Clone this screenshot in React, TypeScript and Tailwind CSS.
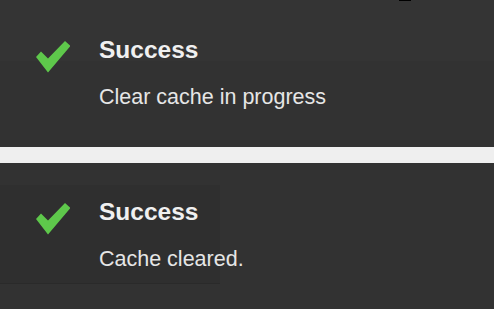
import React from 'react';

interface ToastProps {
  title: string;
  message: string;
  className?: string;
}

const CheckIcon: React.FC = () => (
  <svg width="34" height="32" viewBox="0 0 34 32" className="shrink-0">
    <polygon points="0,16 5,10.5 12,17.5 29,0 34.5,5 12,31.5" fill="#5ec84b" />
  </svg>
);

const Toast: React.FC<ToastProps> = ({ title, message, className = '' }) => (
  <div className={`flex pt-[13px] pb-[12px] ${className}`}>
    <div className="w-[99px] pl-[36px] pt-[5px] shrink-0">
      <CheckIcon />
    </div>
    <div className="flex flex-col">
      <div className="text-[24.5px] leading-[28px] font-bold text-[#f0f0f0]">{title}</div>
      <div className="mt-[21px] text-[21.5px] leading-[24px] text-[#e6e6e6] whitespace-nowrap">{message}</div>
    </div>
  </div>
);

export default function App() {
  return (
    <div className="relative flex flex-col h-[309px] w-full overflow-hidden bg-[#323232] font-['Liberation_Sans',Arial,sans-serif]">
      {/* first notification */}
      <section className="h-[147px] pt-[23px] bg-[linear-gradient(#343434_0_61px,#323232_61px)]">
        <Toast title="Success" message="Clear cache in progress" />
      </section>

      <div className="h-[16px] bg-[#efefef]" />

      {/* second notification */}
      <section className="flex-1 pt-[22px] bg-[#323232]">
        <Toast
          title="Success"
          message="Cache cleared."
          className="w-[220px] bg-[#2f2f2f] border-b border-[#2a2a2a]"
        />
      </section>

      <span className="absolute left-[399px] top-0 w-[12px] h-[1px] bg-black" />
    </div>
  );
}
